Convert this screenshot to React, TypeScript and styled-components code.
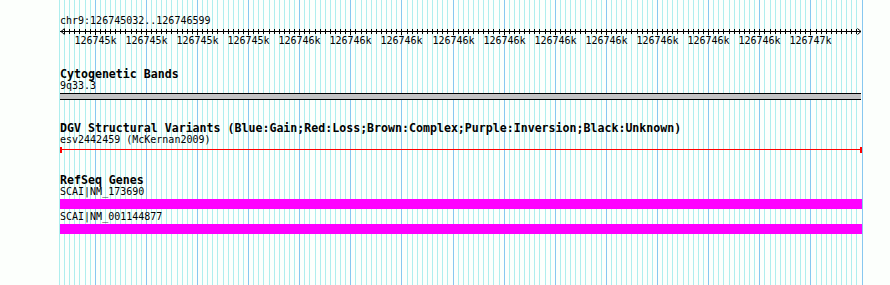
import React from 'react';
import styled, { createGlobalStyle } from 'styled-components';

const START = 126745032;
const END = 126746599;
const LEFT = 60;
const TRACK_WIDTH = 801;
const scale = TRACK_WIDTH / (END - START);

const toX = (bp: number) => Math.round(LEFT + (bp - START) * scale);

const gridPositions: number[] = [];
for (let bp = Math.floor(START / 10) * 10; bp <= Math.ceil(END / 10) * 10; bp += 10) {
  gridPositions.push(bp);
}

const GlobalStyle = createGlobalStyle`
  html, body {
    margin: 0;
    padding: 0;
    background: #fcfffc;
  }
`;

const Panel = styled.div`
  position: relative;
  width: 890px;
  height: 285px;
  overflow: hidden;
  background: #fcfffc;
  font-family: 'DejaVu Sans Mono', 'Liberation Mono', monospace;
  color: #000;
`;

const GridLayer = styled.svg`
  position: absolute;
  left: 0;
  top: 0;
  pointer-events: none;
`;

const Content = styled.div`
  position: relative;
  display: flex;
  flex-direction: column;
  padding-left: ${LEFT}px;
  width: 802px;
`;

const PositionLabel = styled.div`
  margin-top: 15px;
  font-size: 10px;
  line-height: 12px;
  height: 12px;
  white-space: pre;
`;

const RulerSvg = styled.svg`
  display: block;
  margin-left: -${LEFT}px;
`;

const Track = styled.section<{ $gap: number }>`
  display: flex;
  flex-direction: column;
  margin-top: ${({ $gap }) => $gap}px;
`;

const TrackTitle = styled.div`
  font-size: 11.6px;
  font-weight: bold;
  line-height: 12px;
  height: 12px;
  white-space: pre;
`;

const FeatureLabel = styled.div<{ $gap?: number }>`
  font-size: 10px;
  line-height: 12px;
  height: 12px;
  margin-top: ${({ $gap }) => $gap ?? 0}px;
  white-space: pre;
`;

const Band = styled.div`
  margin-top: 1px;
  width: 801px;
  height: 7px;
  box-sizing: border-box;
  border-top: 1px solid #000;
  border-bottom: 1px solid #000;
  background: #c4c4c4;
`;

const Variant = styled.div`
  position: relative;
  width: 802px;
  height: 7px;
  display: flex;
  align-items: center;
  justify-content: space-between;
`;

const VariantLine = styled.div`
  flex: 1;
  height: 1px;
  background: #ff0000;
`;

const VariantCap = styled.div`
  width: 2px;
  height: 6px;
  background: #ff0000;
`;

const GeneBar = styled.div`
  margin-top: 1px;
  width: 802px;
  height: 10px;
  background: #ff00ff;
`;

const Grid: React.FC = () => (
  <GridLayer width={890} height={285}>
    {gridPositions.map((bp) => {
      const x = toX(bp) + 0.5;
      const major = bp % 100 === 0;
      return (
        <line
          key={bp}
          x1={x}
          x2={x}
          y1={0}
          y2={285}
          stroke={major ? '#87c8f0' : '#aeeeee'}
          strokeWidth={1}
        />
      );
    })}
  </GridLayer>
);

const Ruler: React.FC = () => {
  const lineY = 4.5;
  const right = LEFT + TRACK_WIDTH;
  const ticks = gridPositions.filter((bp) => bp >= START && bp <= END);
  return (
    <RulerSvg width={890} height={20}>
      <line x1={LEFT} x2={right} y1={lineY} y2={lineY} stroke="#000" />
      <polyline points={`${LEFT + 4.5},1.5 ${LEFT + 1},${lineY} ${LEFT + 4.5},7.5`} fill="none" stroke="#000" />
      <polyline points={`${right - 3.5},1.5 ${right},${lineY} ${right - 3.5},7.5`} fill="none" stroke="#000" />
      {ticks.map((bp) => {
        const x = toX(bp) + 0.5;
        const major = bp % 100 === 0;
        return (
          <line key={bp} x1={x} x2={x} y1={2} y2={major ? 8 : 7} stroke="#000" />
        );
      })}
      {ticks
        .filter((bp) => bp % 100 === 0)
        .map((bp) => (
          <text
            key={bp}
            x={toX(bp) + 0.5}
            y={16.5}
            textAnchor="middle"
            fontSize={10}
            fontFamily="'DejaVu Sans Mono', 'Liberation Mono', monospace"
            fill="#000"
          >
            {`${Math.round(bp / 1000)}k`}
          </text>
        ))}
    </RulerSvg>
  );
};

const genes = ['SCAI|NM_173690', 'SCAI|NM_001144877'];

export default function App() {
  return (
    <>
      <GlobalStyle />
      <Panel>
        <Grid />
        <Content>
          <PositionLabel>chr9:126745032..126746599</PositionLabel>
          <Ruler />

          <Track $gap={21}>
            <TrackTitle>Cytogenetic Bands</TrackTitle>
            <FeatureLabel>9q33.3</FeatureLabel>
            <Band />
          </Track>

          <Track $gap={22}>
            <TrackTitle>
              DGV Structural Variants (Blue:Gain;Red:Loss;Brown:Complex;Purple:Inversion;Black:Unknown)
            </TrackTitle>
            <FeatureLabel>esv2442459 (McKernan2009)</FeatureLabel>
            <Variant>
              <VariantCap />
              <VariantLine />
              <VariantCap />
            </Variant>
          </Track>

          <Track $gap={21}>
            <TrackTitle>RefSeq Genes</TrackTitle>
            {genes.map((name, i) => (
              <React.Fragment key={name}>
                <FeatureLabel $gap={i === 0 ? 0 : 2}>{name}</FeatureLabel>
                <GeneBar />
              </React.Fragment>
            ))}
          </Track>
        </Content>
      </Panel>
    </>
  );
}
